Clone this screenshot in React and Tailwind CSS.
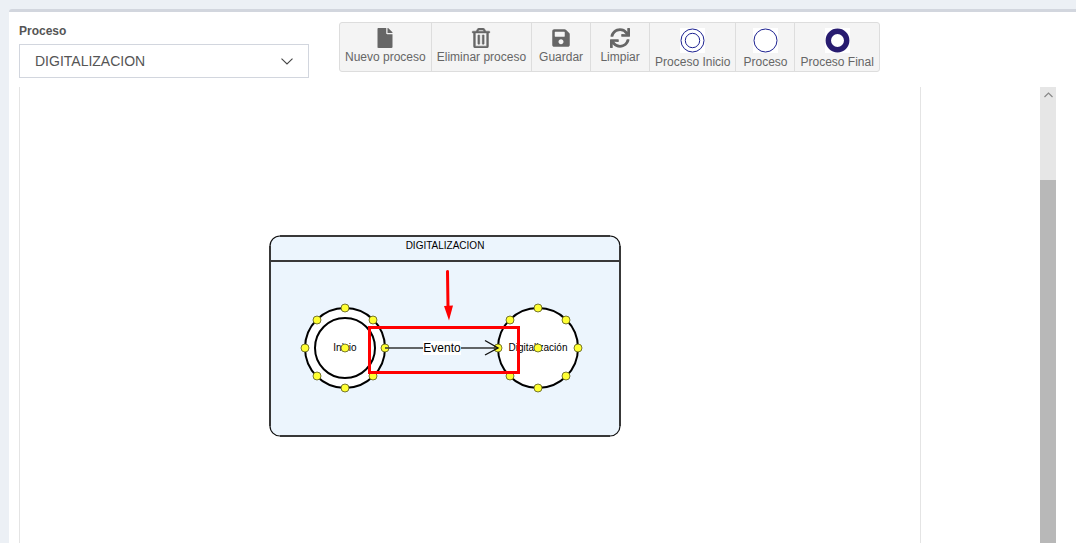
import React from "react";
import { FaFile, FaRegTrashAlt, FaSave, FaSync } from "react-icons/fa";

function StartIcon() {
  return (
    <svg width="25" height="25" viewBox="0 0 25 25" fill="none" stroke="#1c2191" aria-hidden="true">
      <rect width="25" height="25" fill="#fff" stroke="none" />
      <circle cx="12.5" cy="12.5" r="11.5" />
      <circle cx="12.5" cy="12.5" r="7.2" />
    </svg>
  );
}

function StepIcon() {
  return (
    <svg width="25" height="25" viewBox="0 0 25 25" fill="none" stroke="#1c2191" aria-hidden="true">
      <rect width="25" height="25" fill="#fff" stroke="none" />
      <circle cx="12.5" cy="12.5" r="11.5" />
    </svg>
  );
}

function EndIcon() {
  return (
    <svg width="25" height="25" viewBox="0 0 25 25" fill="none" stroke="#281c70" aria-hidden="true">
      <rect width="25" height="25" fill="#fff" stroke="none" />
      <circle cx="12.5" cy="12.5" r="9.2" strokeWidth="5.4" />
    </svg>
  );
}

const tools = [
  { label: "Nuevo proceso", icon: <FaFile size={20} /> },
  { label: "Eliminar proceso", icon: <FaRegTrashAlt size={20} className="stroke-current stroke-[12]" /> },
  { label: "Guardar", icon: <FaSave size={20} /> },
  { label: "Limpiar", icon: <FaSync size={20} /> },
  { label: "Proceso Inicio", icon: <StartIcon /> },
  { label: "Proceso", icon: <StepIcon /> },
  { label: "Proceso Final", icon: <EndIcon /> },
];

const handleOffsets = [
  [0, -40], [28, -28], [40, 0], [28, 28], [0, 40], [-28, 28], [-40, 0], [-28, -28], [0, 0],
];

function Node({ x, y, label, inner }) {
  return (
    <g>
      <circle cx={x} cy={y} r="40" fill="#fff" stroke="#000" strokeWidth="2" />
      {inner && <circle cx={x} cy={y} r="30" fill="#fff" stroke="#000" strokeWidth="2" />}
      <text x={x} y={y + 3} textAnchor="middle" className="text-[10px]">{label}</text>
      {handleOffsets.map(([dx, dy]) => (
        <circle key={`${dx},${dy}`} cx={x + dx} cy={y + dy} r="4" fill="#ffff33" stroke="#55551c" strokeWidth="0.8" />
      ))}
    </g>
  );
}

function Diagram() {
  return (
    <svg width="900" height="456" viewBox="0 0 900 456" className="block" role="group" aria-label="Diagrama del proceso">
      <rect x="250" y="149" width="350" height="200" rx="10" fill="#ecf5fd" stroke="#111" strokeWidth="1.2" />
      <path d="M260 149H590M260 349H590M250 159V339M600 159V339M250 174H600" stroke="#383838" strokeWidth="2" />
      <text x="425" y="162" textAnchor="middle" className="text-[10px]">DIGITALIZACION</text>
      <Node x={325} y={261} label="Inicio" inner />
      <Node x={518} y={261} label="Digitalización" />
      <path d="M365 261H478" stroke="#333" strokeWidth="1.4" />
      <path d="M465 253.5L478 261L465 268" fill="none" stroke="#111" strokeWidth="1.4" />
      <rect x="403" y="254" width="38" height="14" fill="#fff" />
      <text x="422" y="265" textAnchor="middle" className="text-[12px]">Evento</text>
      <rect x="349.5" y="240.5" width="149" height="45" fill="none" stroke="#f00" strokeWidth="3" />
      <path d="M427.5 184.5L428 220" stroke="#f00" strokeWidth="3" strokeLinecap="round" />
      <path d="M424 219L433 218.5L429 233.5Z" fill="#f00" />
    </svg>
  );
}

export default function App() {
  return (
    <div className="flex h-screen flex-col overflow-hidden bg-[#ecf0f5] pt-[9px] pl-[9px] font-['Liberation_Sans',Arial,sans-serif] text-[#555]">
      <main className="flex min-h-0 flex-1 flex-col rounded-tl-[3px] border-t-[3px] border-[#d2d6de] bg-white pr-5 pl-[10px]">
        <div className="flex shrink-0 items-start gap-[30px] pt-[10px]">
          <div className="flex w-[290px] flex-col gap-1">
            <label htmlFor="proceso" className="pt-px text-[12px] leading-[17px] font-bold">Proceso</label>
            <div className="grid items-center">
              <select id="proceso" defaultValue="DIGITALIZACION" className="col-start-1 row-start-1 h-[34px] w-full appearance-none border border-[#d2d6de] bg-white px-[15px] text-[14px]">
                <option>DIGITALIZACION</option>
              </select>
              <svg width="12" height="7" viewBox="0 0 12 7" fill="none" stroke="#444" strokeWidth="1.1" className="pointer-events-none col-start-1 row-start-1 mr-4 justify-self-end" aria-hidden="true">
                <path d="M0.5 0.7L6 6L11.5 0.7" />
              </svg>
            </div>
          </div>
          <div role="toolbar" aria-label="Acciones" className="flex h-[50px] pl-px">
            {tools.map((tool) => (
              <button
                key={tool.label}
                type="button"
                className="-ml-px flex min-w-[60px] flex-col items-center border border-[#ddd] bg-[#f4f4f4] px-[5px] pt-[5px] text-[12px] leading-[18px] whitespace-nowrap text-[#666] first:rounded-l-[3px] last:rounded-r-[3px]"
              >
                {tool.icon}
                <span>{tool.label}</span>
              </button>
            ))}
          </div>
        </div>
        <div className="mt-[9px] flex min-h-0 flex-1 justify-between">
          <div className="shrink-0 overflow-hidden border-x border-[#e4e4e4] text-black">
            <Diagram />
          </div>
          <div className="flex w-4 flex-col bg-[#e6e6e6]" aria-hidden="true">
            <div className="flex h-[93px] shrink-0 justify-center pt-[5px]">
              <svg width="9" height="6" viewBox="0 0 9 6" fill="none" stroke="#888" strokeWidth="1.2">
                <path d="M0.5 5L4.5 1L8.5 5" />
              </svg>
            </div>
            <div className="flex-1 bg-[#b8b8b8]" />
          </div>
        </div>
      </main>
    </div>
  );
}
